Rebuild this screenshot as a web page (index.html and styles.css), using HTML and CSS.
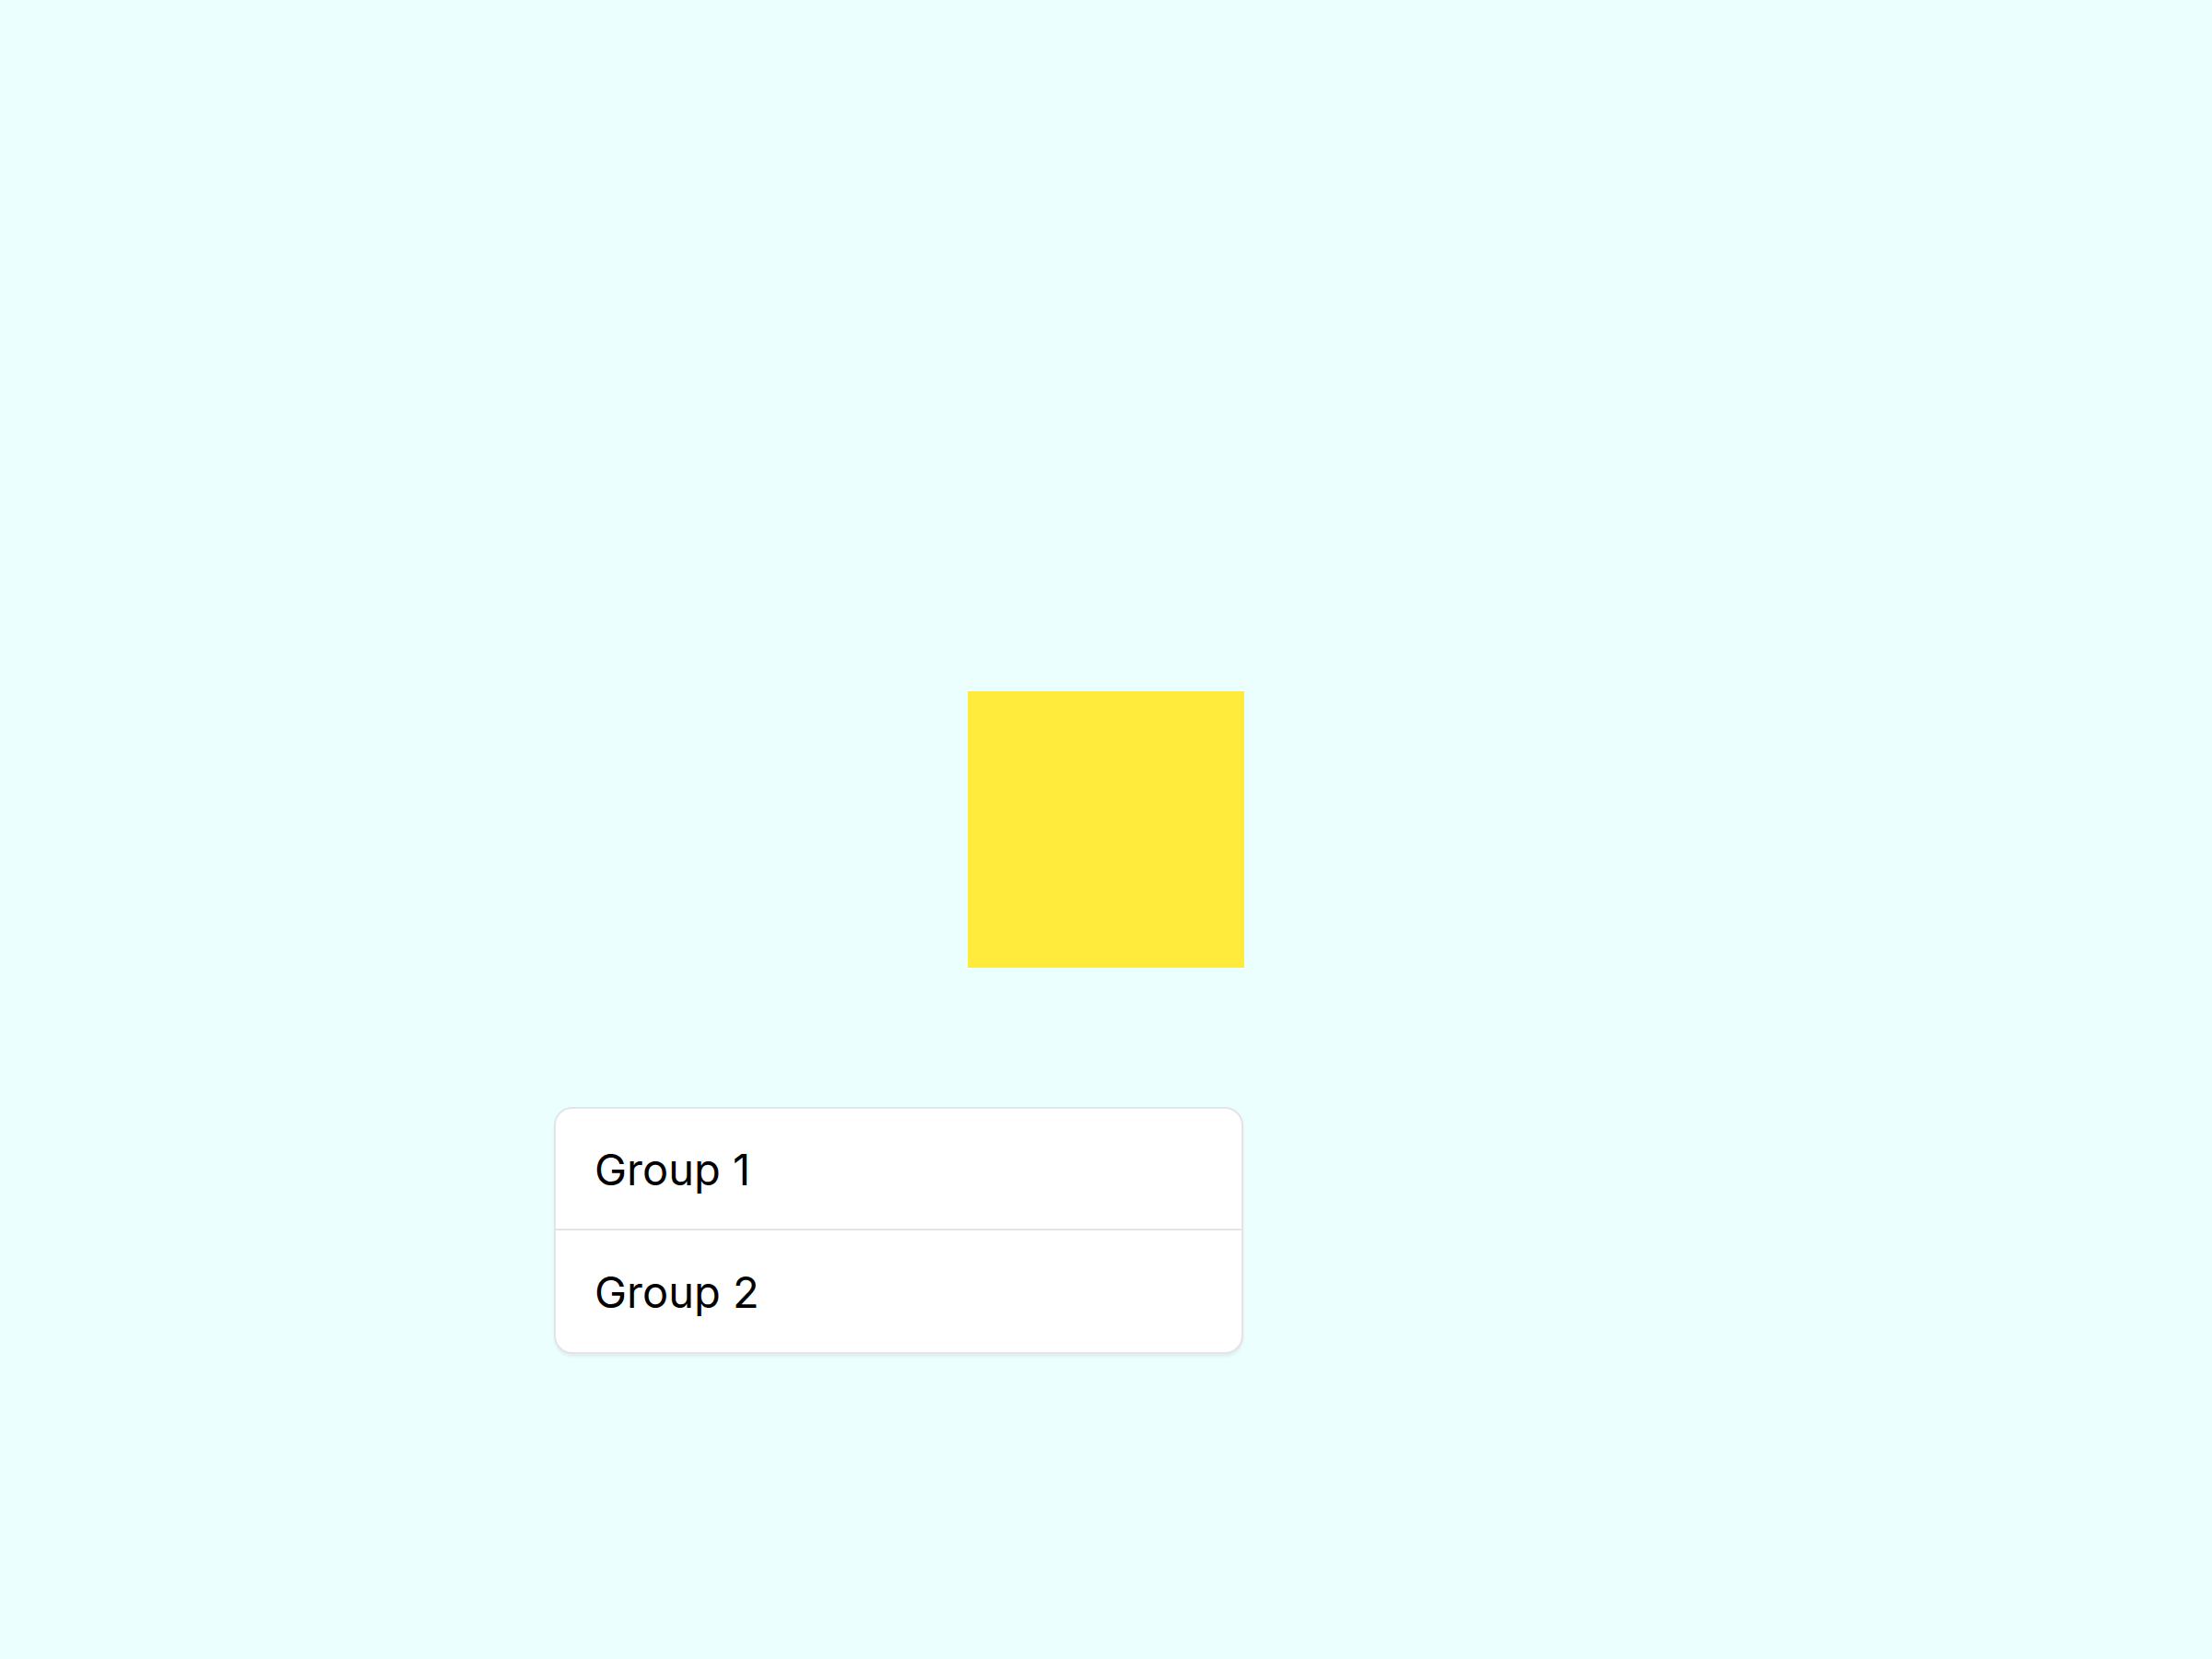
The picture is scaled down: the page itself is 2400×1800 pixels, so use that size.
FILE: index.html
```html
<!DOCTYPE html>
<html>
<head>
<meta charset="utf-8">
<link rel="stylesheet" href="styles.css">
</head>
<body>
<main class="stage">
  <div class="square"></div>
  <ul class="groups">
    <li class="group">Group 1</li>
    <li class="group">Group 2</li>
  </ul>
</main>
</body>
</html>
```
FILE: styles.css
```css
html, body {
  margin: 0;
  padding: 0;
  background: #ebffff;
  font-family: Inter, "Noto Sans", sans-serif;
}
.stage {
  width: 2400px;
  height: 1800px;
  box-sizing: border-box;
  padding-top: 750px;
  display: flex;
  flex-direction: column;
}
.square {
  width: 300px;
  height: 300px;
  background: #ffeb3b;
  margin-left: 1050px;
}
.groups {
  list-style: none;
  margin: 151px 0 0 601px;
  padding: 0;
  width: 748px;
  box-sizing: border-box;
  background: #ffffff;
  border: 2px solid #e4e4e7;
  border-radius: 20px;
  box-shadow: 0 3px 3px rgba(0, 0, 0, 0.06);
  overflow: hidden;
}
.group {
  height: 130px;
  display: flex;
  align-items: center;
  padding-left: 42px;
  font-size: 47px;
  color: #000;
}
.group + .group {
  height: 132px;
  border-top: 2px solid #e4e4e7;
}
```
